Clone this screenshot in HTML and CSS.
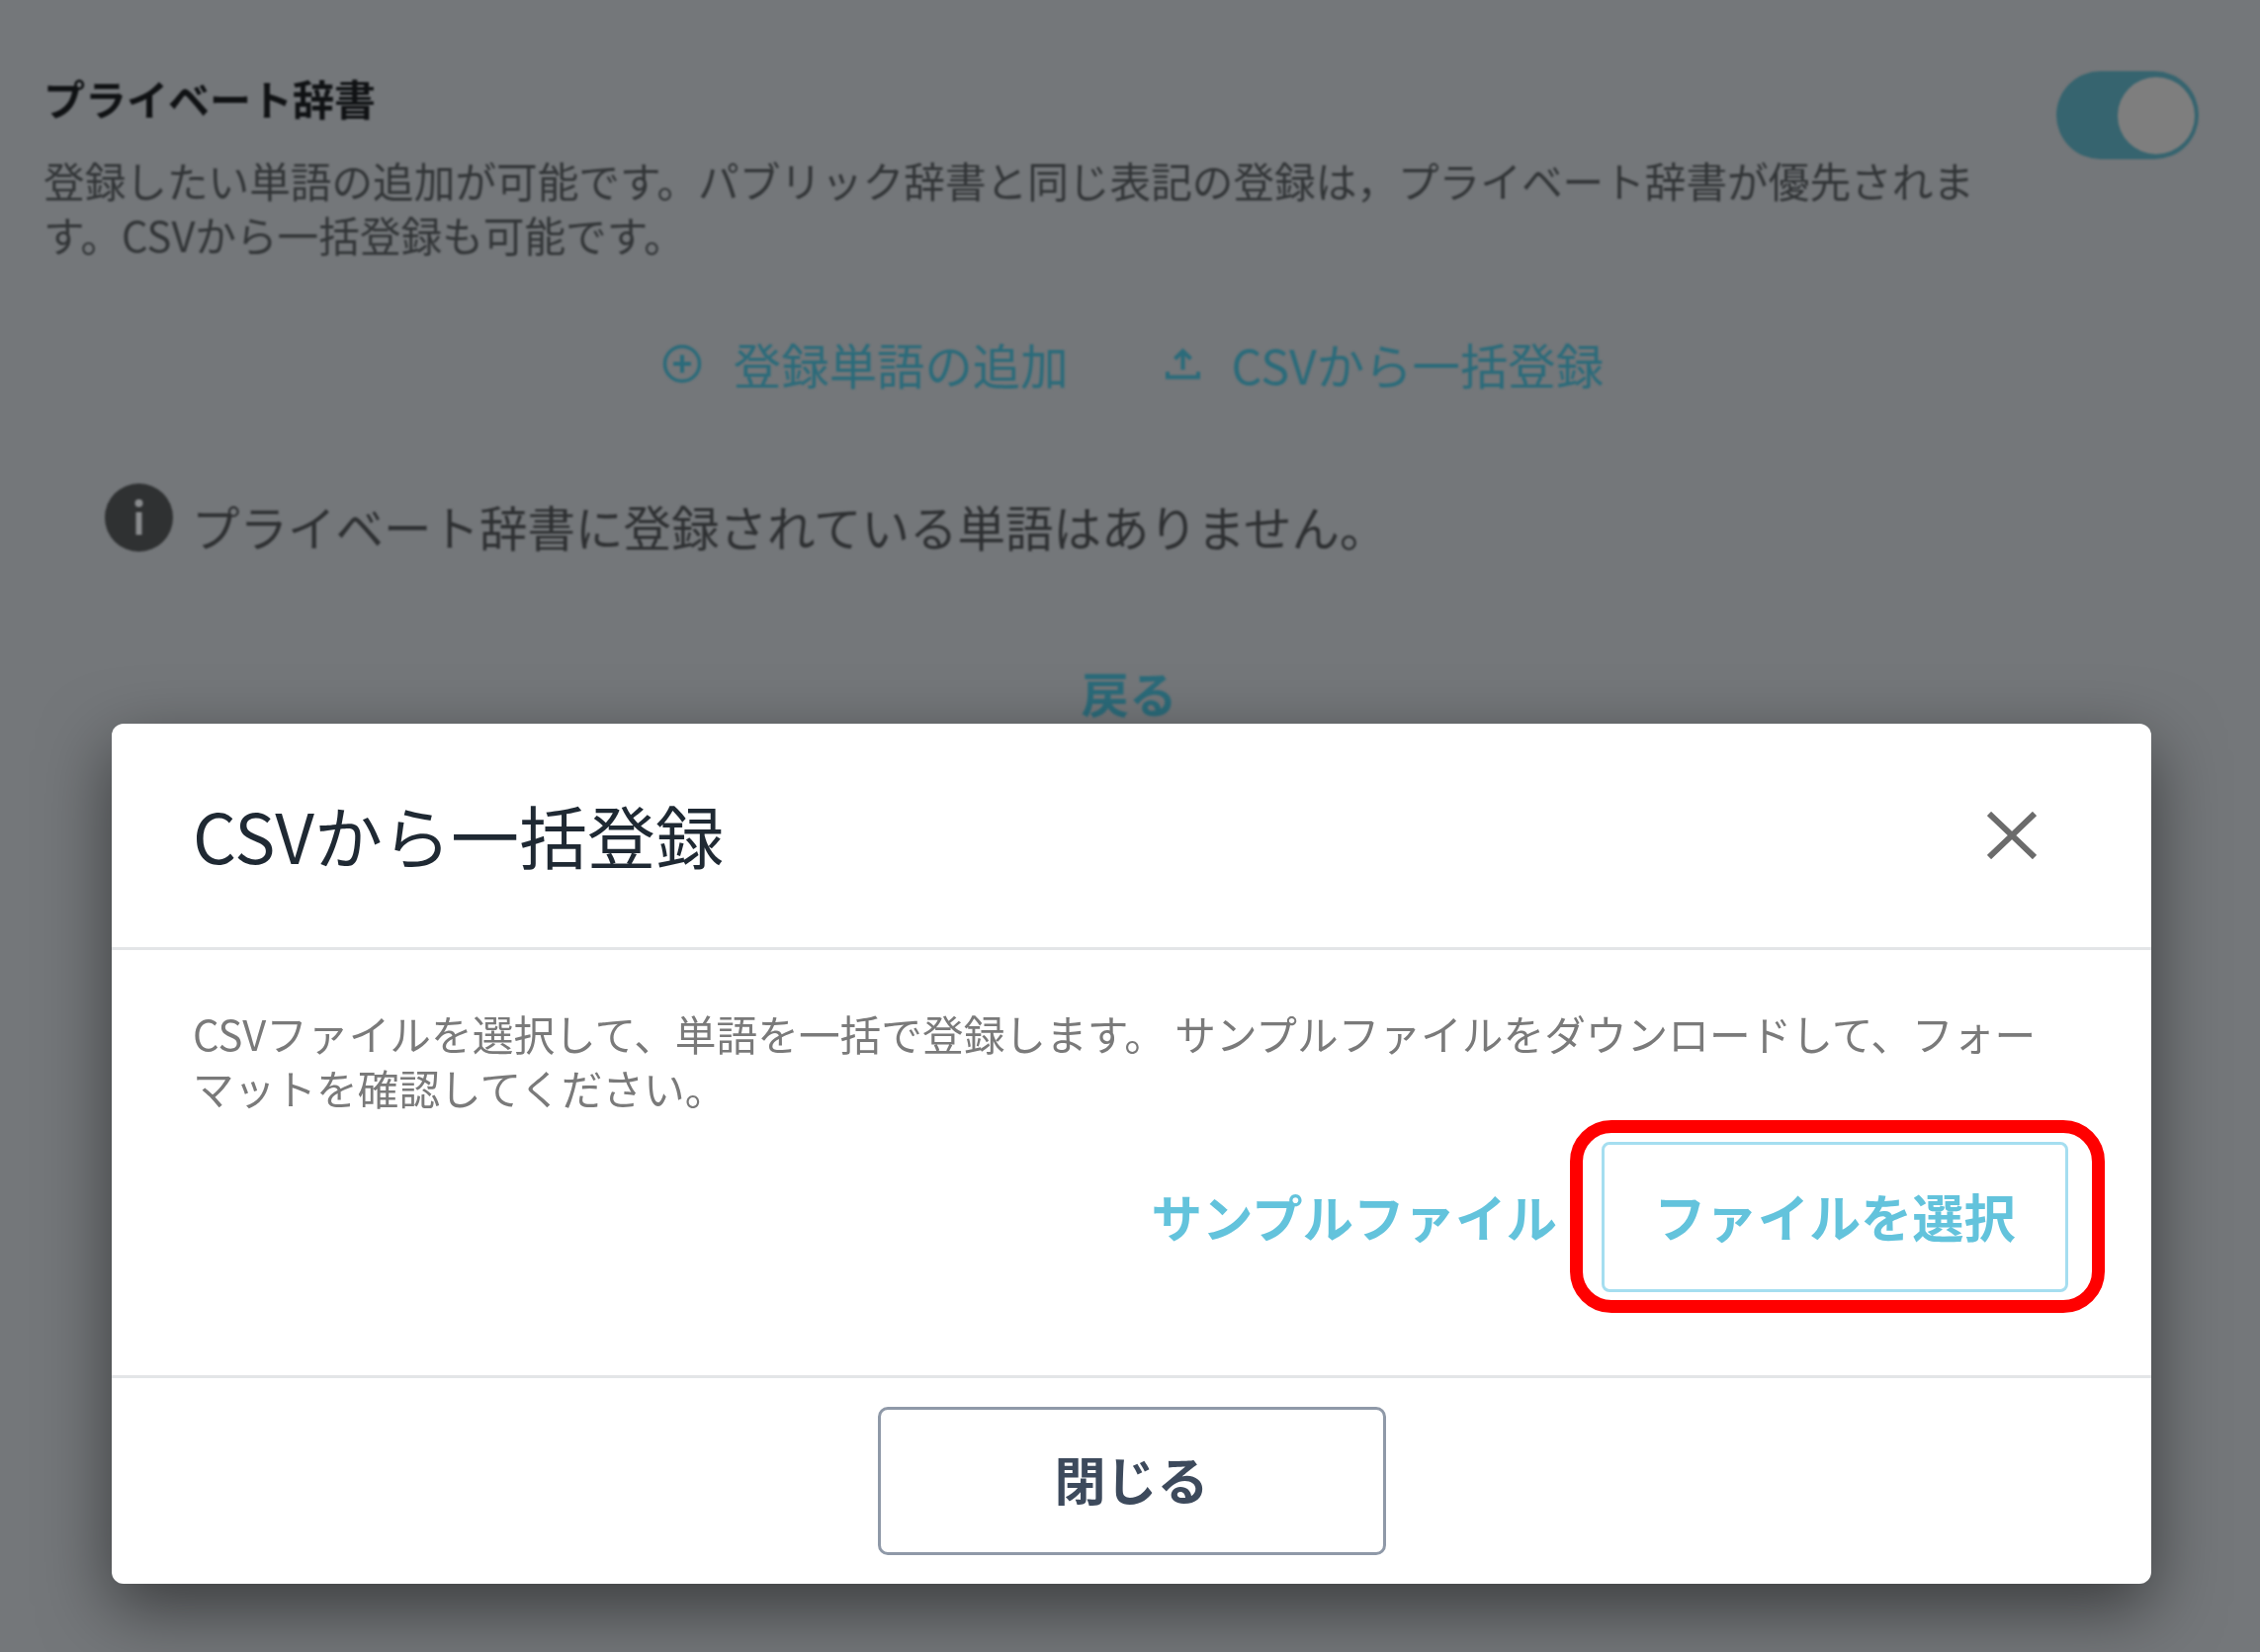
FILE: index.html
```html
<!DOCTYPE html>
<html>
<head>
    <title>プライベート辞書</title>
    <link rel="stylesheet" href="styles.css">
</head>
<body>
<div class="page">
    <div class="dict-head">
        <div class="dict-info">
            <h2>プライベート辞書</h2>
            <p>登録したい単語の追加が可能です。パブリック辞書と同じ表記の登録は，プライベート辞書が優先されます。CSVから一括登録も可能です。</p>
        </div>
        <div class="toggle"><span class="knob"></span></div>
    </div>
    <div class="actions">
        <a class="action">
            <svg class="icon-plus" viewBox="0 0 40 40"><circle cx="20" cy="20" r="17.5" fill="none" stroke="currentColor" stroke-width="3.5"/><path d="M20 11v18M11 20h18" stroke="currentColor" stroke-width="4" fill="none"/></svg>
            登録単語の追加
        </a>
        <a class="action">
            <svg class="icon-upload" viewBox="0 0 35 32"><path d="M17.5 22V4M9.500 11l8-8 8 8" stroke="currentColor" stroke-width="4" fill="none"/><path d="M2 24v5.500h31V24" stroke="currentColor" stroke-width="4" fill="none"/></svg>
            CSVから一括登録
        </a>
    </div>
    <div class="notice">
        <svg class="icon-info" viewBox="0 0 69 69"><circle cx="34.500" cy="34.500" r="34.500" fill="#2f3132"/><circle cx="34.500" cy="20" r="4" fill="#8a8c8e"/><rect x="31.500" y="29" width="6" height="23" fill="#8a8c8e"/></svg>
        <span>プライベート辞書に登録されている単語はありません。</span>
    </div>
    <div class="back">戻る</div>
</div>

<div class="modal">
    <div class="modal-header">
        <h3>CSVから一括登録</h3>
        <svg class="icon-close" viewBox="0 0 50 48"><path d="M2 2l46 44M48 2L2 46" stroke="currentColor" stroke-width="6" fill="none"/></svg>
    </div>
    <div class="modal-body">
        <p>CSVファイルを選択して、単語を一括で登録します。 サンプルファイルをダウンロードして、フォーマットを確認してください。</p>
        <div class="file-row">
            <a class="sample-link">サンプルファイル</a>
            <div class="file-btn">ファイルを選択<span class="highlight"></span></div>
        </div>
    </div>
    <div class="modal-footer">
        <button class="close-btn">閉じる</button>
    </div>
</div>
</body>
</html>
```

FILE: styles.css
```css
* {
    box-sizing: border-box;
}
html, body {
    margin: 0;
    height: 100%;
}
body {
    position: relative;
    overflow: hidden;
    background-color: #74777a;
    font-family: "Noto Sans CJK JP", "Noto Sans", sans-serif;
}
.page {
    padding: 71px 62px 0 44px;
    filter: blur(0.9px);
}
.dict-head {
    display: flex;
    justify-content: space-between;
    align-items: flex-start;
}
.dict-info {
    width: 1960px;
}
.dict-info h2 {
    margin: 0;
    font-size: 42px;
    line-height: 56px;
    font-weight: 700;
    color: #101214;
}
.dict-info p {
    margin: 0;
    margin-top: 28px;
    font-size: 41.650px;
    line-height: 55px;
    color: #323537;
}
.toggle {
    display: flex;
    justify-content: flex-end;
    align-items: center;
    width: 144px;
    height: 89px;
    margin-top: 1px;
    padding-right: 4px;
    background-color: #36646f;
    border-radius: 45px;
}
.knob {
    width: 78px;
    height: 78px;
    border-radius: 50%;
    background-color: #7e7e7e;
}
.actions {
    display: flex;
    justify-content: center;
    gap: 98px;
    margin: 53px 0 0 24px;
    height: 100px;
    align-items: center;
}
.action {
    display: flex;
    align-items: center;
    gap: 32px;
    font-size: 48.400px;
    color: #2b6b7a;
}
.icon-plus {
    width: 40px;
    height: 40px;
}
.icon-upload {
    width: 35px;
    height: 32px;
}
.notice {
    display: flex;
    align-items: center;
    gap: 19px;
    margin-top: 79px;
    padding-left: 62px;
    font-size: 48.500px;
    line-height: 70px;
    color: #2e3032;
}
.icon-info {
    width: 69px;
    height: 69px;
    margin-top: -17px;
}
.back {
    margin: 103px 0 0 16px;
    text-align: center;
    font-size: 48.500px;
    line-height: 60px;
    font-weight: 700;
    color: #2b6b7a;
}

.modal {
    position: absolute;
    left: 113px;
    top: 732px;
    width: 2063px;
    height: 870px;
    display: flex;
    flex-direction: column;
    background: white;
    border-radius: 12px;
    box-shadow: 0 24px 70px rgba(0,0,0,0.5);
    filter: blur(0.6px);
}
.modal-header {
    display: flex;
    justify-content: space-between;
    align-items: center;
    height: 229px;
    padding: 0 116px 0 82px;
    border-bottom: 3px solid #e3e5e7;
}
.modal-header h3 {
    margin: 0 0 3px;
    font-size: 69px;
    font-weight: 400;
    color: #1f2933;
}
.icon-close {
    width: 50px;
    height: 48px;
    color: #6b6b6b;
}
.modal-body {
    flex: 1;
    padding: 57px 84px 0 82px;
}
.modal-body p {
    margin: 0;
    font-size: 41.700px;
    line-height: 55px;
    color: #7a7a7a;
}
.file-row {
    display: flex;
    justify-content: flex-end;
    align-items: center;
    gap: 45px;
    margin-top: 27px;
}
.sample-link {
    font-size: 51.500px;
    font-weight: 700;
    color: #63c3dc;
    margin-bottom: 4px;
}
.file-btn {
    position: relative;
    display: flex;
    align-items: center;
    justify-content: center;
    width: 472px;
    height: 152px;
    padding-bottom: 4px;
    font-size: 52.200px;
    font-weight: 700;
    color: #63c3dc;
    border: 3px solid #a5def0;
    border-radius: 8px;
}
/* annotation drawn over the button */
.highlight {
    position: absolute;
    left: -35px;
    right: -40px;
    top: -25px;
    bottom: -24px;
    border: 13px solid #ff0000;
    border-radius: 42px;
}
.modal-footer {
    display: flex;
    justify-content: center;
    align-items: flex-start;
    height: 211px;
    padding-top: 29px;
    border-top: 3px solid #e3e5e7;
}
.close-btn {
    width: 514px;
    height: 150px;
    padding-bottom: 6px;
    font-family: inherit;
    font-size: 52px;
    font-weight: 700;
    color: #3d4a5c;
    background: white;
    border: 3px solid #8f99a8;
    border-radius: 10px;
}
```
